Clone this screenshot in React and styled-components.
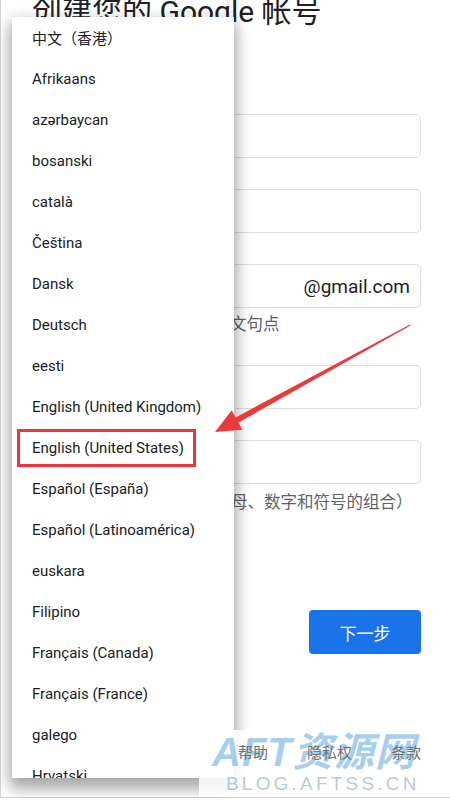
import React from 'react';
import styled, { createGlobalStyle } from 'styled-components';

const GlobalStyle = createGlobalStyle`
  html, body {
    margin: 0;
    padding: 0;
    background: #fff;
  }
  body {
    font-family: Roboto, "Noto Sans CJK SC", sans-serif;
    color: #202124;
  }
  * {
    box-sizing: border-box;
  }
`;

const Frame = styled.div`
  position: relative;
  width: 450px;
  height: 798px;
  overflow: hidden;
  background: #fff;
  box-shadow: inset 1px 0 0 #d6d6d6, inset 0 -1px 0 #d6d6d6;
`;

const Form = styled.main`
  display: flex;
  flex-direction: column;
  padding: 0 29px 0 32px;
`;

const Title = styled.h1`
  margin: -6px 0 0;
  font-size: 30px;
  font-weight: 400;
  line-height: 36px;
  white-space: nowrap;
  color: #202124;
`;

const Field = styled.div`
  display: flex;
  align-items: center;
  justify-content: flex-end;
  height: 44px;
  margin-top: ${(p) => p.$gap}px;
  padding: 0 10px;
  border: 1px solid #dadce0;
  border-radius: 5px;
`;

const Suffix = styled.span`
  font-size: 19px;
  color: #202124;
`;

const Helper = styled.p`
  margin: ${(p) => p.$gap}px 0 0;
  font-size: 16.5px;
  line-height: 22px;
  color: #5f6368;
  white-space: nowrap;
`;

const ButtonRow = styled.div`
  display: flex;
  align-items: center;
  justify-content: space-between;
  margin-top: 96px;
`;

const TextLink = styled.a`
  font-size: 15px;
  color: #1a73e8;
`;

const NextButton = styled.button`
  width: 112px;
  height: 44px;
  border: none;
  border-radius: 4px;
  background: #1a73e8;
  color: #fff;
  font-family: Roboto, "Noto Sans CJK SC", sans-serif;
  font-size: 17px;
`;

const Footer = styled.footer`
  position: relative;
  z-index: 3;
  display: flex;
  justify-content: flex-end;
  gap: 39px;
  margin-top: 88px;
  font-size: 15px;
  line-height: 22px;
  color: #6d7175;
`;

const Menu = styled.ul`
  position: absolute;
  left: 12px;
  top: 17px;
  z-index: 1;
  width: 222px;
  height: 761px;
  margin: 0;
  padding: 0;
  list-style: none;
  overflow: hidden;
  background: #fff;
  box-shadow: 0 10px 14px 2px rgba(0, 0, 0, 0.28), 0 2px 14px 2px rgba(0, 0, 0, 0.12);
`;

const Item = styled.li`
  display: flex;
  align-items: center;
  height: 41px;
  padding-left: 5px;
`;

const Label = styled.span`
  display: inline-flex;
  align-items: center;
  height: 38px;
  padding: 0 9px 0 12px;
  border: 3px solid ${(p) => (p.$marked ? '#e8383b' : 'transparent')};
  font-size: 15px;
  color: #202124;
  white-space: nowrap;
`;

const Watermark = styled.div`
  position: absolute;
  left: 199px;
  top: 730px;
  z-index: 2;
  width: 246px;
  height: 67px;
  display: flex;
  flex-direction: column;
  align-items: flex-start;
  padding-left: 13px;
  background: rgba(255, 255, 255, 0.85);
  pointer-events: none;
`;

const Brand = styled.span`
  font-family: "Liberation Sans", "Noto Sans CJK SC", sans-serif;
  font-style: italic;
  font-weight: 700;
  font-size: 40px;
  line-height: 44px;
  letter-spacing: 1px;
  color: rgba(80, 160, 218, 0.5);
`;

const Domain = styled.span`
  margin-left: 14px;
  font-family: "Liberation Sans", sans-serif;
  font-size: 19px;
  line-height: 20px;
  letter-spacing: 3.2px;
  color: rgba(120, 148, 170, 0.5);
`;

const Overlay = styled.svg`
  position: absolute;
  left: 0;
  top: 0;
  z-index: 4;
  pointer-events: none;
`;

const languages = [
  '中文（香港）',
  'Afrikaans',
  'azərbaycan',
  'bosanski',
  'català',
  'Čeština',
  'Dansk',
  'Deutsch',
  'eesti',
  'English (United Kingdom)',
  'English (United States)',
  'Español (España)',
  'Español (Latinoamérica)',
  'euskara',
  'Filipino',
  'Français (Canada)',
  'Français (France)',
  'galego',
  'Hrvatski',
  'Italiano',
];

const App = () => {
  return (
    <Frame>
      <GlobalStyle />
      <Form>
        <Title>创建您的 Google 帐号</Title>
        <Field $gap={84} />
        <Field $gap={31} />
        <Field $gap={31}>
          <Suffix>@gmail.com</Suffix>
        </Field>
        <Helper $gap={6}>您可以使用字母、数字和英文句点</Helper>
        <Field $gap={29} />
        <Field $gap={31} />
        <Helper $gap={8}>请使用 8 个或更多字符（字母、数字和符号的组合）</Helper>
        <ButtonRow>
          <TextLink>改为登录</TextLink>
          <NextButton>下一步</NextButton>
        </ButtonRow>
        <Footer>
          <span>帮助</span>
          <span>隐私权</span>
          <span>条款</span>
        </Footer>
      </Form>

      <Menu>
        {languages.map((name) => (
          <Item key={name}>
            <Label $marked={name === 'English (United States)'}>{name}</Label>
          </Item>
        ))}
      </Menu>

      <Watermark>
        <Brand>AFT资源网</Brand>
        <Domain>BLOG.AFTSS.CN</Domain>
      </Watermark>

      <Overlay width="450" height="798" viewBox="0 0 450 798">
        <polygon
          points="215,432 231.7,410.3 235.6,417.4 410,324.4 410.6,325.6 238.4,422.6 242.3,429.7"
          fill="#ea3a3a"
        />
      </Overlay>
    </Frame>
  );
};

export default App;
